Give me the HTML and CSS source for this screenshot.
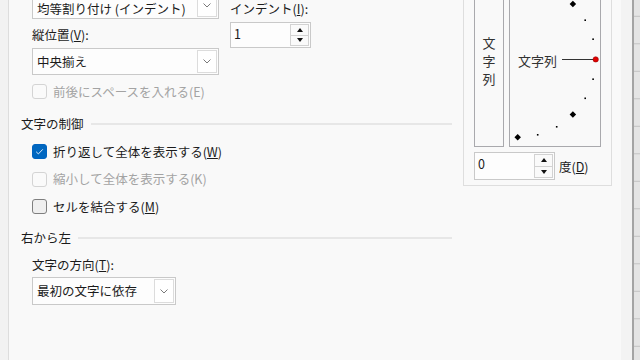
FILE: index.html
```html
<!DOCTYPE html>
<html lang="ja">
<head>
<meta charset="utf-8">
<title>セルの書式設定 - 配置</title>
<link rel="stylesheet" href="styles.css">
</head>
<body>
<div class="screen">
  <div class="edge-left"></div>
  <div class="dialog">
    <div class="col-left">
      <div class="align-rows">
        <div class="col-a">
          <div class="combo combo-top">
            <span class="combo-text">均等割り付け (インデント)</span>
            <span class="combo-btn"><svg width="8" height="5" viewBox="0 0 8 5"><path d="M0.5 0.5 L4 4 L7.5 0.5" fill="none" stroke="#7a7a7a" stroke-width="1"/></svg></span>
          </div>
          <div class="label label-v">縦位置(<u>V</u>):</div>
          <div class="combo">
            <span class="combo-text">中央揃え</span>
            <span class="combo-btn"><svg width="8" height="5" viewBox="0 0 8 5"><path d="M0.5 0.5 L4 4 L7.5 0.5" fill="none" stroke="#7a7a7a" stroke-width="1"/></svg></span>
          </div>
        </div>
        <div class="col-b">
          <div class="label label-indent">インデント(<u>I</u>):</div>
          <div class="spin spin-indent">
            <span class="spin-value">1</span>
            <span class="spin-btns">
              <span class="spin-btn"><span class="tri-up"></span></span>
              <span class="spin-btn"><span class="tri-down"></span></span>
            </span>
          </div>
        </div>
      </div>

      <div class="check check-dis check-e"><span class="box"></span><span>前後にスペースを入れる(E)</span></div>

      <div class="section sec-control"><span class="sec-title">文字の制御</span><span class="rule"></span></div>

      <div class="checks">
        <div class="check"><span class="box box-on"><svg width="13" height="13" viewBox="0 0 13 13"><path d="M3.2 6.8 L5.4 8.9 L9.8 4.3" fill="none" stroke="#dbe9f8" stroke-width="1"/></svg></span><span>折り返して全体を表示する(<u>W</u>)</span></div>
        <div class="check check-dis"><span class="box"></span><span>縮小して全体を表示する(K)</span></div>
        <div class="check"><span class="box box-off"></span><span>セルを結合する(<u>M</u>)</span></div>
      </div>

      <div class="section sec-rtl"><span class="sec-title">右から左</span><span class="rule"></span></div>

      <div class="label label-t">文字の方向(<u>T</u>):</div>
      <div class="combo combo-dir">
        <span class="combo-text">最初の文字に依存</span>
        <span class="combo-btn"><svg width="8" height="5" viewBox="0 0 8 5"><path d="M0.5 0.5 L4 4 L7.5 0.5" fill="none" stroke="#7a7a7a" stroke-width="1"/></svg></span>
      </div>
    </div>

    <div class="col-right">
      <div class="orient">
        <div class="orient-top">
          <div class="vbox">
            <span>文</span><span>字</span><span>列</span>
          </div>
          <div class="abox">
            <svg class="arc" width="90" height="156" viewBox="510 -10 90 156">
              <g fill="#000">
                <rect x="570.6" y="1.7" width="4.6" height="4.6" transform="rotate(45 572.9 4)"/>
                <rect x="570.6" y="112.2" width="4.6" height="4.6" transform="rotate(45 572.9 114.5)"/>
                <rect x="515.4" y="135" width="4.6" height="4.6" transform="rotate(45 517.7 137.3)"/>
                <rect x="584.4" y="19.4" width="1.6" height="1.6"/>
                <rect x="592.3" y="38.4" width="1.6" height="1.6"/>
                <rect x="592.3" y="78.4" width="1.6" height="1.6"/>
                <rect x="584.4" y="97.5" width="1.6" height="1.6"/>
                <rect x="555.9" y="126" width="1.6" height="1.6"/>
                <rect x="536.9" y="134" width="1.6" height="1.6"/>
              </g>
              <line x1="562" y1="59.5" x2="594" y2="59.5" stroke="#333" stroke-width="1"/>
              <circle cx="595.7" cy="59.4" r="2.7" fill="#e00000" stroke="#8a0000" stroke-width="0.5"/>
            </svg>
            <span class="arc-text">文字列</span>
          </div>
        </div>
        <div class="deg-row">
          <div class="spin spin-deg">
            <span class="spin-value">0</span>
            <span class="spin-btns">
              <span class="spin-btn"><span class="tri-up"></span></span>
              <span class="spin-btn"><span class="tri-down"></span></span>
            </span>
          </div>
          <span class="deg-label">度(<u>D</u>)</span>
        </div>
      </div>
    </div>
  </div>
  <div class="edge-win"></div>
  <div class="edge-line"></div>
  <div class="grid"></div>
</div>
</body>
</html>
```

FILE: styles.css
```css
html, body {
  margin: 0;
  padding: 0;
}

body {
  width: 640px;
  height: 360px;
  overflow: hidden;
  background: #f9f9f9;
  color: #1b1b1b;
  font-family: "Noto Sans CJK JP", "Noto Sans", sans-serif;
  font-size: 12.5px;
  line-height: 16px;
}

u {
  text-decoration: underline;
  text-underline-offset: 1px;
  text-decoration-thickness: 1px;
}

.screen {
  display: flex;
  width: 640px;
  height: 360px;
}

.edge-left {
  flex: none;
  width: 8px;
  background: #f2f2f2;
  border-right: 1px solid #dddddd;
}

.dialog {
  flex: none;
  width: 612px;
  display: flex;
  background: #f9f9f9;
}

.col-left {
  flex: none;
  width: 431px;
  padding-left: 12px;
  display: flex;
  flex-direction: column;
}

.align-rows {
  display: flex;
  margin-top: -8px;
  margin-left: 11px;
}

.col-a {
  flex: none;
  width: 187px;
  display: flex;
  flex-direction: column;
}

.col-b {
  flex: none;
  margin-left: 11px;
  display: flex;
  flex-direction: column;
  align-items: flex-start;
}

.label {
  line-height: 16px;
  white-space: nowrap;
}

.label-v {
  padding: 8px 0 5px;
}

.label-indent {
  margin-top: 9px;
}

.label-t {
  margin-top: 11px;
  margin-left: 11px;
}

/* combo boxes */
.combo {
  box-sizing: border-box;
  height: 27px;
  display: flex;
  align-items: stretch;
  padding: 1px;
  border: 1px solid #c9c9c9;
  background: #fdfdfd;
}

.combo-text {
  flex: 1;
  display: flex;
  align-items: center;
  padding-left: 3px;
  white-space: nowrap;
}

.combo-top .combo-text {
  align-items: flex-start;
  padding-top: 7px;
}

.combo-btn {
  flex: none;
  box-sizing: border-box;
  width: 20px;
  display: flex;
  align-items: center;
  justify-content: center;
  border: 1px solid #dcdcdc;
  background: #ffffff;
}

.combo-dir {
  width: 144px;
  height: 28px;
  margin-top: 4px;
  margin-left: 11px;
}

/* spinners */
.spin {
  box-sizing: border-box;
  width: 81px;
  display: flex;
  border: 1px solid #c9c9c9;
  background: #fdfdfd;
}

.spin-indent {
  height: 26px;
  margin-top: 5px;
}

.spin-deg {
  height: 28px;
}

.spin-value {
  flex: 1;
  padding-left: 3px;
  padding-top: 3px;
  line-height: 16px;
}

.spin-btns {
  flex: none;
  width: 19px;
  display: flex;
  flex-direction: column;
  padding: 1px 1px 1px 0;
}

.spin-btn {
  flex: 1;
  display: flex;
  align-items: center;
  justify-content: center;
  border: 1px solid #d2d2d2;
  background: #fafafa;
}

.spin-btn + .spin-btn {
  border-top: none;
}

.tri-up {
  width: 0;
  height: 0;
  border-left: 3.5px solid transparent;
  border-right: 3.5px solid transparent;
  border-bottom: 4px solid #111111;
}

.tri-down {
  width: 0;
  height: 0;
  border-left: 3.5px solid transparent;
  border-right: 3.5px solid transparent;
  border-top: 4px solid #111111;
}

/* checkboxes */
.check {
  display: flex;
  align-items: center;
  height: 15px;
  margin-left: 11px;
  white-space: nowrap;
}

.check .box {
  flex: none;
  box-sizing: border-box;
  width: 15px;
  height: 15px;
  margin-right: 6px;
  border-radius: 3px;
  border: 1px solid #d4d4d4;
  background: #fafafa;
  display: flex;
  align-items: center;
  justify-content: center;
}

.check .box-on {
  border-color: #0063c0;
  background: #0067c0;
}

.check .box-off {
  border-color: #7f7f7f;
  background: #efefef;
}

.check-dis {
  color: #a3a3a3;
}

.check-e {
  margin-top: 9px;
}

.checks {
  display: flex;
  flex-direction: column;
  gap: 12.5px;
  margin-top: 12px;
}

/* sections */
.section {
  display: flex;
  align-items: flex-start;
  line-height: 16px;
}

.sec-title {
  white-space: nowrap;
}

.rule {
  flex: 1;
  height: 2px;
  margin-top: 7px;
  margin-left: 7px;
  background: #e7e7e7;
}

.sec-control {
  margin-top: 17px;
}

.sec-rtl {
  margin-top: 16px;
}

/* orientation group */
.col-right {
  flex: none;
  width: 149px;
  margin-left: 11px;
}

.orient {
  box-sizing: border-box;
  width: 149px;
  margin-top: -20px;
  padding: 8px 10px 5px;
  border: 1px solid #dedede;
}

.orient-top {
  display: flex;
  gap: 5px;
}

.vbox {
  box-sizing: border-box;
  width: 30px;
  height: 158px;
  border: 1px solid #a9a9ad;
  display: flex;
  flex-direction: column;
  align-items: center;
  padding-top: 44px;
  color: #333333;
  font-size: 13px;
  line-height: 18px;
}

.abox {
  position: relative;
  box-sizing: border-box;
  width: 92px;
  height: 158px;
  border: 1px solid #a9a9ad;
}

.arc {
  position: absolute;
  left: 0;
  top: 0;
}

.arc-text {
  position: absolute;
  left: 8px;
  top: 63px;
  color: #333333;
  font-size: 13px;
  line-height: 16px;
  white-space: nowrap;
}

.deg-row {
  display: flex;
  align-items: center;
  margin-top: 5px;
}

.deg-label {
  margin-left: 4px;
  padding-top: 2px;
  white-space: nowrap;
}

/* right side window edge */
.edge-win {
  flex: none;
  width: 11px;
  background: #f3f3f3;
}

.edge-line {
  flex: none;
  width: 2px;
  background: #a4a4a4;
}

.grid {
  flex: none;
  width: 6px;
  background-color: #e4e4e4;
  background-image: linear-gradient(#c2c2c2 1px, transparent 1px);
  background-size: 100% 27.5px;
  background-position: 0 15.8px;
}
```
